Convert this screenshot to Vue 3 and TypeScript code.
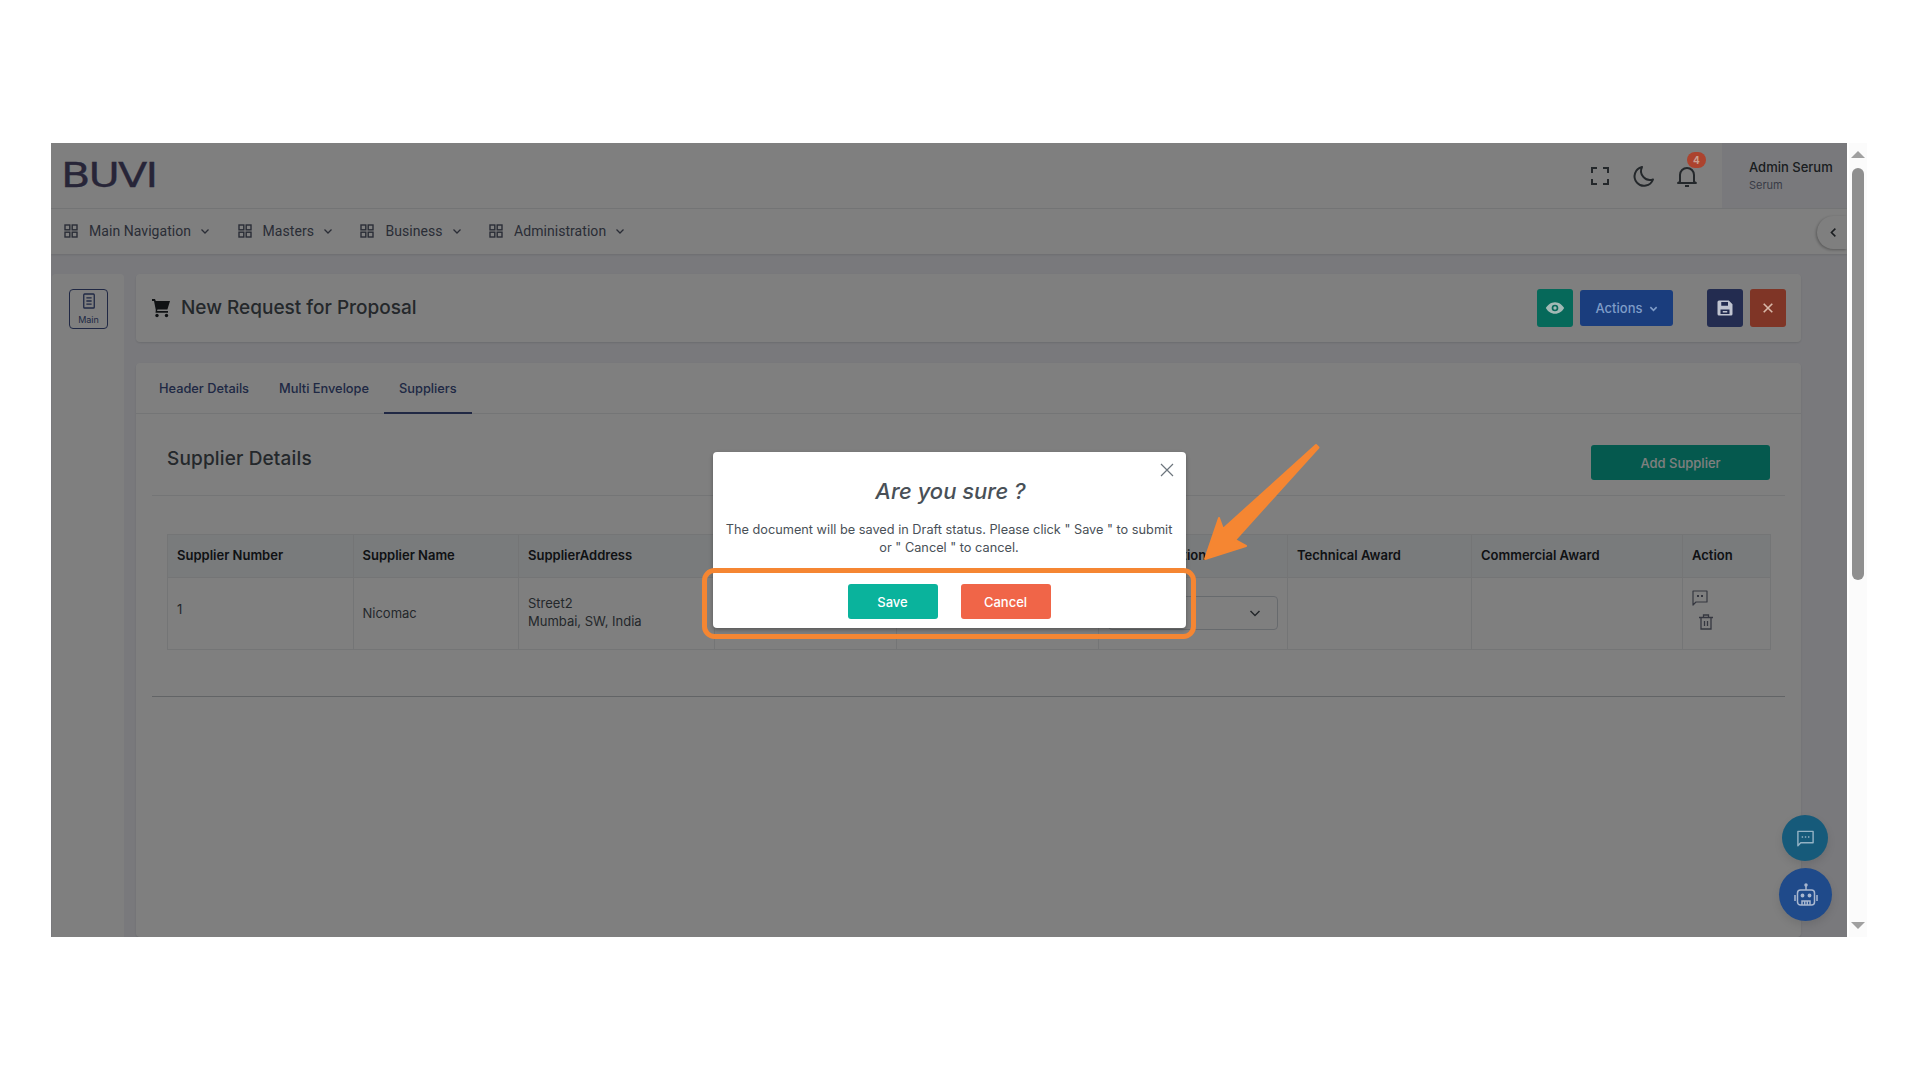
<script setup lang="ts">
const navItems = ['Main Navigation', 'Masters', 'Business', 'Administration'];
const tabs = ['Header Details', 'Multi Envelope', 'Suppliers'];
</script>

<template>
  <div class="page">
    <div class="frame">
      <header class="topbar">
        <div class="logo">BUVI</div>
        <div class="top-icons">
          <svg class="ti" viewBox="0 0 24 24" fill="none" stroke="currentColor" stroke-width="2">
            <path d="M4 9V4h5M15 4h5v5M20 15v5h-5M9 20H4v-5" />
          </svg>
          <svg class="ti" viewBox="0 0 24 24" fill="none" stroke="currentColor" stroke-width="2">
            <path d="M10 3a9.500 9.500 0 1 0 11 12.500A9 9 0 0 1 10 3z" stroke-linejoin="round" />
          </svg>
          <div class="bell">
            <svg class="ti" viewBox="0 0 24 24" fill="none" stroke="currentColor" stroke-width="2">
              <path d="M5 17.500V11a7 7 0 0 1 14 0v6.500l2 1.500H3zM10 22h4" stroke-linejoin="round" />
            </svg>
            <span class="badge">4</span>
          </div>
        </div>
        <div class="user">
          <div class="user-name">Admin Serum</div>
          <div class="user-role">Serum</div>
        </div>
      </header>

      <nav class="navbar">
        <div v-for="item in navItems" :key="item" class="nav-item">
          <svg class="nav-grid" viewBox="0 0 14 14" fill="none" stroke="currentColor" stroke-width="1.400">
            <rect x="1" y="1" width="4.800" height="4.800" />
            <rect x="8.200" y="1" width="4.800" height="4.800" />
            <rect x="1" y="8.200" width="4.800" height="4.800" />
            <rect x="8.200" y="8.200" width="4.800" height="4.800" />
          </svg>
          <span>{{ item }}</span>
          <svg class="nav-chev" viewBox="0 0 10 10" fill="none" stroke="currentColor" stroke-width="1.300">
            <path d="M1.500 3.500 5 7l3.500-3.500" />
          </svg>
        </div>
        <div class="collapse">
          <svg viewBox="0 0 10 14" width="8" height="11" fill="none" stroke="currentColor" stroke-width="2">
            <path d="M8 2 3 7l5 5" />
          </svg>
        </div>
      </nav>

      <div class="body">
        <aside class="sidebar">
          <div class="side-btn">
            <svg viewBox="0 0 16 18" width="14" height="16" fill="none" stroke="currentColor" stroke-width="1.500">
              <rect x="2" y="1" width="12" height="16" rx="1" />
              <path d="M5 5.500h6M5 9h6M5 12.500h6" />
            </svg>
            <span>Main</span>
          </div>
        </aside>

        <main class="content">
          <section class="title-card">
            <svg class="cart" viewBox="0 0 20 20" fill="currentColor">
              <path d="M1 1h3l.8 2H19l-2.600 8.500H6.500L6 13h11v1.800H4.500L4.800 12 3 3H1z" />
              <circle cx="6" cy="17.500" r="1.700" />
              <circle cx="15.500" cy="17.500" r="1.700" />
            </svg>
            <h1 class="page-title">New Request for Proposal</h1>
            <div class="title-actions">
              <button class="btn-icon green">
                <svg viewBox="0 0 24 24" width="20" height="20" fill="currentColor">
                  <path fill-rule="evenodd" d="M12 5c5 0 9 3.500 11 7-2 3.500-6 7-11 7S3 15.500 1 12c2-3.500 6-7 11-7zm0 3a4 4 0 1 0 0 8 4 4 0 0 0 0-8zm0 2a2 2 0 1 1 0 4 2 2 0 0 1 0-4z" />
                </svg>
              </button>
              <button class="btn-actions">
                Actions
                <svg viewBox="0 0 10 10" width="9" height="9" fill="none" stroke="currentColor" stroke-width="1.800">
                  <path d="M1.500 3.500 5 7l3.500-3.500" />
                </svg>
              </button>
              <button class="btn-icon navy">
                <svg viewBox="0 0 24 24" width="18" height="18" fill="currentColor">
                  <path fill-rule="evenodd" d="M4 2h13l5 5v13a2 2 0 0 1-2 2H4a2 2 0 0 1-2-2V4a2 2 0 0 1 2-2zm3 2v5h9V4zm-1 10v6h12v-6zm3 2h6v2H9z" />
                </svg>
              </button>
              <button class="btn-icon red">
                <svg viewBox="0 0 14 14" width="12" height="12" fill="none" stroke="currentColor" stroke-width="1.900">
                  <path d="M2 2l10 10M12 2 2 12" />
                </svg>
              </button>
            </div>
          </section>

          <section class="card">
            <div class="tabs">
              <div v-for="t in tabs" :key="t" class="tab" :class="{ active: t === 'Suppliers' }">{{ t }}</div>
            </div>
            <div class="card-head">
              <h2 class="card-title">Supplier Details</h2>
              <button class="btn-add">Add Supplier</button>
            </div>
            <div class="table-wrap">
              <table class="grid">
                <colgroup>
                  <col style="width: 185.500px" />
                  <col style="width: 165.500px" />
                  <col style="width: 196px" />
                  <col style="width: 182px" />
                  <col style="width: 201.500px" />
                  <col style="width: 189.500px" />
                  <col style="width: 184px" />
                  <col style="width: 211px" />
                  <col style="width: 88px" />
                </colgroup>
                <thead>
                  <tr>
                    <th>Supplier Number</th>
                    <th>Supplier Name</th>
                    <th>SupplierAddress</th>
                    <th></th>
                    <th></th>
                    <th>Final Evaluation</th>
                    <th>Technical Award</th>
                    <th>Commercial Award</th>
                    <th>Action</th>
                  </tr>
                </thead>
                <tbody>
                  <tr>
                    <td class="num">1</td>
                    <td>Nicomac</td>
                    <td class="addr">Street2<br />Mumbai, SW, India</td>
                    <td></td>
                    <td></td>
                    <td>
                      <div class="select">
                        <svg viewBox="0 0 12 12" width="12" height="12" fill="none" stroke="currentColor" stroke-width="1.500">
                          <path d="M1.500 4 6 8.500 10.500 4" />
                        </svg>
                      </div>
                    </td>
                    <td></td>
                    <td></td>
                    <td class="actions-cell">
                      <div class="row-actions">
                        <svg class="ra" viewBox="0 0 16 16" fill="none" stroke="currentColor" stroke-width="1.200">
                          <path d="M1 1h14v11H4l-3 3z" stroke-linejoin="round" />
                          <path d="M5 6h2M9 6h2" stroke-width="1.800" />
                        </svg>
                        <svg class="ra trash" viewBox="0 0 16 16" fill="none" stroke="currentColor" stroke-width="1.300">
                          <path d="M1 3.500h14M5.500 3.500V1h5v2.500M3 3.500V15h10V3.500M6.500 7v5M9.500 7v5" />
                        </svg>
                      </div>
                    </td>
                  </tr>
                </tbody>
              </table>
            </div>
            <div class="card-rule"></div>
          </section>
        </main>
      </div>

      <div class="fab chat">
        <svg viewBox="0 0 20 20" width="19" height="19" fill="none" stroke="currentColor" stroke-width="1.500">
          <path d="M2 2.500h16v12H5l-3 3z" stroke-linejoin="round" />
          <path d="M6 8.500h1.500M9.300 8.500h1.500M12.600 8.500h1.500" />
        </svg>
      </div>
      <div class="fab bot">
        <svg viewBox="0 0 26 26" width="26" height="26" fill="none" stroke="currentColor" stroke-width="1.500">
          <rect x="4.500" y="8" width="17" height="15" rx="3" />
          <path d="M13 8V4M2 13v6M24 13v6M9 23v-4h8v4M11.700 19v4M14.300 19v4" />
          <circle cx="13" cy="3" r="1" fill="currentColor" />
          <circle cx="9.500" cy="13.500" r="1.200" fill="currentColor" />
          <circle cx="16.500" cy="13.500" r="1.200" fill="currentColor" />
        </svg>
      </div>

      <div class="overlay">
        <div class="dialog">
          <svg class="dialog-close" viewBox="0 0 14 14" fill="none" stroke="currentColor" stroke-width="1.200">
            <path d="M1 1l12 12M13 1 1 13" />
          </svg>
          <h3 class="dialog-title">Are you sure ?</h3>
          <p class="dialog-text">The document will be saved in Draft status. Please click " Save " to submit<br />or " Cancel " to cancel.</p>
          <div class="dialog-actions">
            <button class="btn-save">Save</button>
            <button class="btn-cancel">Cancel</button>
          </div>
        </div>
      </div>

      <svg class="callout" viewBox="0 0 1796 794" fill="none">
        <rect x="653.500" y="427.500" width="489" height="66" rx="10" stroke="#f58632" stroke-width="5" />
        <path d="M1154 416 1168 375 1172 386 1265 302 1267.500 304.500 1184 397 1195 403Z" fill="#f58632" stroke="#f58632" stroke-width="2" stroke-linejoin="round" />
      </svg>
    </div>

    <div class="scrollbar">
      <span class="arrow up"></span>
      <div class="thumb"></div>
      <span class="arrow down"></span>
    </div>
  </div>
</template>

<style>
html,
body {
  margin: 0;
  background: #fff;
}
</style>

<style scoped>
* {
  box-sizing: border-box;
}
.page {
  width: 1920px;
  height: 1080px;
  padding: 143px 0 0 51px;
  display: flex;
  align-items: flex-start;
  background: #fff;
  font-family: Inter, "Noto Sans", sans-serif;
  color: #495057;
  overflow: hidden;
}
.frame {
  position: relative;
  width: 1796px;
  height: 794px;
  overflow: hidden;
  background: #f3f3f9;
  display: flex;
  flex-direction: column;
}
.topbar {
  height: 66px;
  flex: none;
  display: flex;
  align-items: center;
  background: #fff;
  border-bottom: 1px solid #e9ebec;
  padding-left: 10px;
}
.logo {
  font-family: "DejaVu Sans", sans-serif;
  font-size: 34px;
  line-height: 1;
  letter-spacing: -1.500px;
  color: #4f4a70;
  -webkit-text-stroke: 0.300px #4f4a70;
  margin-top: -2px;
  transform: scaleX(1.26);
  transform-origin: left center;
}
.top-icons {
  margin-left: auto;
  display: flex;
  align-items: center;
  gap: 19.500px;
  margin-right: 23px;
  color: #495057;
}
.ti {
  width: 24px;
  height: 24px;
  display: block;
}
.bell {
  width: 24px;
  height: 24px;
  position: relative;
}
/* sits above the backdrop like the title buttons */
.badge {
  position: absolute;
  z-index: 3;
  left: 12px;
  top: -12px;
  width: 19px;
  height: 16px;
  border-radius: 8px;
  background: #ac432e;
  color: #c9a090;
  font-size: 10px;
  font-weight: 700;
  line-height: 16px;
  text-align: center;
}
.user {
  width: 125px;
  height: 100%;
  background: #f3f3f9;
  padding: 15px 0 0 27px;
}
.user-name {
  font-size: 13px;
  line-height: 18px;
  font-weight: 500;
  color: #343a40;
  white-space: nowrap;
}
.user-role {
  font-size: 11px;
  line-height: 18px;
  color: #74788d;
}
.navbar {
  height: 45px;
  flex: none;
  position: relative;
  display: flex;
  align-items: center;
  gap: 27.500px;
  padding: 0 0 2px 13px;
  background: #fff;
  box-shadow: 0 1px 2px rgba(56, 65, 74, 0.15);
}
.nav-item {
  display: flex;
  align-items: center;
  font-family: Roboto, sans-serif;
  font-size: 14px;
  letter-spacing: 0.050px;
  color: #545a6d;
}
.nav-grid {
  width: 14px;
  height: 14px;
  margin-right: 11px;
}
.nav-chev {
  width: 10px;
  height: 10px;
  margin-left: 9px;
}
.collapse {
  position: absolute;
  right: 0;
  top: 7px;
  width: 30px;
  height: 33px;
  padding-left: 2px;
  border-radius: 17px 0 0 17px;
  background: #fff;
  box-shadow: -1px 1px 3px rgba(0, 0, 0, 0.3);
  display: flex;
  align-items: center;
  justify-content: center;
  color: #343a40;
}
.body {
  flex: 1;
  display: flex;
  padding: 20px 0 0 1px;
  min-height: 0;
}
.sidebar {
  width: 72px;
  flex: none;
  background: #fff;
  border-radius: 4px 4px 0 0;
  padding: 15px 0 0 17px;
}
.side-btn {
  width: 39px;
  height: 40px;
  border: 1px solid #405189;
  border-radius: 4px;
  display: flex;
  flex-direction: column;
  align-items: center;
  padding-top: 3px;
  color: #405189;
  font-size: 9px;
  line-height: 12px;
}
.side-btn span {
  margin-top: 5px;
}
.content {
  margin-left: 12px;
  width: 1665px;
  flex: none;
  display: flex;
  flex-direction: column;
  gap: 21px;
}
.title-card {
  height: 68px;
  flex: none;
  background: #fff;
  border-radius: 4px;
  box-shadow: 0 1px 2px rgba(56, 65, 74, 0.15);
  display: flex;
  align-items: center;
  padding: 0 15px;
}
.cart {
  width: 20px;
  height: 20px;
  color: #212529;
  margin-right: 10px;
}
.page-title {
  margin: 0 0 2px;
  font-size: 19px;
  font-weight: 500;
  color: #495057;
}
.title-actions {
  position: relative;
  z-index: 3;
  margin-left: auto;
  display: flex;
  align-items: center;
}
button {
  border: 0;
  font-family: inherit;
  padding: 0;
}
.btn-icon {
  width: 36px;
  height: 38px;
  border-radius: 3px;
  display: flex;
  align-items: center;
  justify-content: center;
}
/* these sit above the backdrop, so their dimmed colours are written out */
.green {
  background: #06695a;
  color: #a3b9b5;
}
.navy {
  background: #232c50;
  color: #c0c4d0;
  margin-left: 34px;
  margin-right: 7px;
}
.red {
  background: #7f3526;
  color: #d8b8a8;
}
.btn-actions {
  width: 93px;
  height: 36px;
  margin-left: 7px;
  border-radius: 3px;
  background: #1a3d7d;
  color: #7f9cc8;
  font-size: 13px;
  font-weight: 500;
  display: flex;
  align-items: center;
  justify-content: center;
  gap: 6px;
}
.card {
  flex: 1;
  background: #fff;
  border-radius: 4px;
  box-shadow: 0 1px 2px rgba(56, 65, 74, 0.15);
}
.tabs {
  height: 51px;
  display: flex;
  padding-left: 8px;
  border-bottom: 1px solid #e9ebec;
}
.tab {
  padding: 0 15px;
  font-size: 12.800px;
  font-weight: 500;
  line-height: 51px;
  color: #405189;
  white-space: nowrap;
}
.tab.active {
  border-bottom: 2px solid #405189;
  height: 51px;
}
.card-head {
  height: 82px;
  margin: 0 16px;
  border-bottom: 1px solid #e9ebec;
  padding: 0 15px;
  display: flex;
  justify-content: space-between;
  align-items: flex-start;
}
.card-title {
  margin: 33px 0 0;
  font-size: 19px;
  line-height: 24px;
  font-weight: 500;
  letter-spacing: 0.150px;
  color: #495057;
}
.btn-add {
  margin-top: 31px;
  width: 179px;
  height: 35px;
  border-radius: 3px;
  background: #0ab39c;
  color: #fff;
  font-size: 13px;
  font-weight: 500;
}
.table-wrap {
  padding: 38px 31px 0;
}
.grid {
  width: 1603px;
  table-layout: fixed;
  border-collapse: collapse;
  font-size: 13px;
  color: #495057;
}
.grid th {
  height: 43px;
  background: #f3f6f9;
  border: 1px solid #e9ebec;
  padding: 0 9px 2px;
  text-align: left;
  font-weight: 600;
  color: #212529;
  white-space: nowrap;
}
.grid td {
  height: 72px;
  border: 1px solid #e9ebec;
  padding: 0 9px 2px;
  line-height: 18px;
}
.grid td.num {
  padding-bottom: 10px;
}
.grid td.addr {
  padding-bottom: 4px;
}
.grid td.actions-cell {
  padding-bottom: 8px;
}
.select {
  height: 34px;
  border: 1px solid #ced4da;
  border-radius: 4px;
  display: flex;
  align-items: center;
  justify-content: flex-end;
  padding-right: 16px;
}
.row-actions {
  display: flex;
  flex-direction: column;
  gap: 8px;
  color: #6b6f80;
}
.ra {
  width: 16px;
  height: 16px;
  display: block;
}
.trash {
  margin-left: 6px;
}
.card-rule {
  margin: 46px 16px 0;
  border-top: 1px solid #c5c8cc;
}
.fab {
  position: absolute;
  z-index: 3;
  border-radius: 50%;
  display: flex;
  align-items: center;
  justify-content: center;
  box-shadow: 0 4px 8px rgba(0, 0, 0, 0.1);
}
.chat {
  width: 46px;
  height: 46px;
  left: 1731px;
  top: 672px;
  background: #165a7a;
  color: #93b2c4;
}
.bot {
  width: 53px;
  height: 53px;
  left: 1728px;
  top: 725px;
  background: #1f4a8a;
  color: #a9b8d0;
}
.overlay {
  position: absolute;
  inset: 0;
  z-index: 2;
  background: rgba(0, 0, 0, 0.5);
  display: flex;
  justify-content: center;
  align-items: flex-start;
  padding-top: 309px;
}
.dialog {
  position: relative;
  width: 473px;
  height: 176px;
  background: #fff;
  border-radius: 4px;
  box-shadow: 0 2px 4px rgba(0, 0, 0, 0.3);
  text-align: center;
  padding-top: 23px;
}
.dialog-close {
  position: absolute;
  right: 12px;
  top: 11px;
  width: 14px;
  height: 14px;
  color: #6c757d;
}
.dialog-title {
  margin: 0;
  padding-left: 3px;
  font-size: 22px;
  line-height: 32px;
  font-style: italic;
  font-weight: 500;
  color: #495057;
}
.dialog-text {
  margin: 14px 0 0;
  font-size: 12.750px;
  line-height: 18px;
  color: #495057;
  white-space: nowrap;
}
.dialog-actions {
  margin-top: 27px;
  display: flex;
  justify-content: center;
  gap: 23px;
}
.btn-save,
.btn-cancel {
  width: 90px;
  height: 35px;
  border-radius: 3px;
  color: #fff;
  font-size: 13px;
  font-weight: 500;
}
.btn-save {
  background: #0ab39c;
}
.btn-cancel {
  background: #f06548;
}
.callout {
  position: absolute;
  inset: 0;
  z-index: 4;
  width: 1796px;
  height: 794px;
  pointer-events: none;
}
.scrollbar {
  position: relative;
  margin-left: 2px;
  width: 18px;
  height: 794px;
  background: #fbfbfb;
  display: flex;
  flex-direction: column;
  align-items: center;
}
.arrow {
  width: 0;
  height: 0;
  border-left: 7px solid transparent;
  border-right: 7px solid transparent;
}
.up {
  margin-top: 8px;
  border-bottom: 7px solid #a0a0a0;
}
.thumb {
  margin-top: 10px;
  width: 12px;
  height: 412px;
  border-radius: 6px;
  background: #8f8f8f;
}
.down {
  margin-top: auto;
  margin-bottom: 8px;
  border-top: 7px solid #a0a0a0;
}
</style>
